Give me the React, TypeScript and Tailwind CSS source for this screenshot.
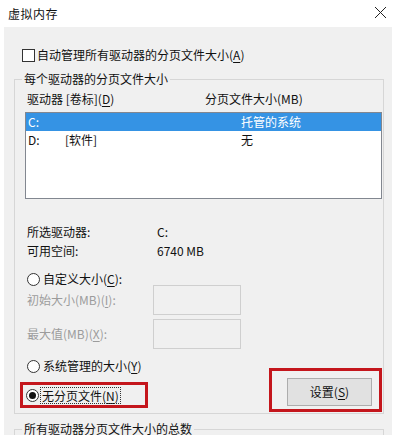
import React from "react"

const font = { fontFamily: '"Noto Sans CJK SC", "Noto Sans", sans-serif' }

function Key({ k }: { k: string }) {
  return (
    <>
      (<span className="underline underline-offset-2">{k}</span>)
    </>
  )
}

function Radio({ checked }: { checked?: boolean }) {
  return (
    <span className="w-[13px] h-[13px] rounded-full border border-[#333] bg-white flex items-center justify-center shrink-0">
      {checked ? <span className="w-[7px] h-[7px] rounded-full bg-[#111]" /> : null}
    </span>
  )
}

export default function App() {
  return (
    <div
      className="w-[409px] h-[435px] bg-white overflow-hidden flex flex-col text-[12px] leading-[16px] text-[#111]"
      style={font}
    >
      {/* title bar */}
      <div className="h-[27px] shrink-0 flex items-center justify-between pl-[8px] pr-[22px]">
        <span className="tracking-[0.5px]">虚拟内存</span>
        <svg width="13" height="13" viewBox="0 0 13 13" className="mt-[-3px]">
          <path d="M1 1 L12 12 M12 1 L1 12" stroke="#222" strokeWidth="1" fill="none" />
        </svg>
      </div>

      {/* body */}
      <div className="ml-[4px] w-[388px] flex-1 bg-[#f0f0f0] pt-[20px]">
        <div className="flex items-center h-[16px] pl-[18px] gap-[2px]">
          <span className="w-[13px] h-[13px] border border-[#333] bg-white shrink-0" />
          <span>
            自动管理所有驱动器的分页文件大小<Key k="A" />
          </span>
        </div>

        <fieldset className="mt-[8px] ml-[10px] w-[370px] border border-[#d6d6d6] pl-[10px] pr-[1px] pb-[1px]">
          <legend className="ml-[-3px] px-[2px] h-[16px]">每个驱动器的分页文件大小</legend>

          <div className="mt-[4px] flex h-[16px]">
            <span className="ml-[2px] w-[178px]">
              驱动器 [卷标]<Key k="D" />
            </span>
            <span>分页文件大小(MB)</span>
          </div>

          <div className="mt-[5px] h-[87px] border border-[#828790] bg-white">
            <div className="flex h-[18px] items-center bg-[#3593e4] text-white">
              <span className="pl-[2px] w-[215px]">C:</span>
              <span>托管的系统</span>
            </div>
            <div className="flex h-[18px] items-center">
              <span className="pl-[2px] w-[39px]">D:</span>
              <span className="w-[176px]">[软件]</span>
              <span>无</span>
            </div>
          </div>

          <div className="mt-[24px] flex h-[18px] items-center">
            <span className="ml-[2px] w-[130px]">所选驱动器:</span>
            <span>C:</span>
          </div>
          <div className="mt-[1px] flex h-[18px] items-center">
            <span className="ml-[2px] w-[130px]">可用空间:</span>
            <span>6740 MB</span>
          </div>

          <div className="mt-[12px] flex h-[14px] items-center gap-[3px] ml-[2px]">
            <Radio />
            <span>
              自定义大小<Key k="C" />:
            </span>
          </div>
          <div className="mt-[-1px] flex h-[30px] items-center">
            <span className="ml-[2px] w-[126px] text-[#9c9c9c]">
              初始大小(MB)<Key k="I" />:
            </span>
            <span className="w-[88px] h-[30px] border border-[#cfcfcf] bg-[#f0f0f0]" />
          </div>
          <div className="mt-[4px] flex h-[30px] items-center">
            <span className="ml-[2px] w-[126px] text-[#9c9c9c]">
              最大值(MB)<Key k="X" />:
            </span>
            <span className="w-[88px] h-[30px] border border-[#cfcfcf] bg-[#f0f0f0]" />
          </div>

          <div className="mt-[8px] flex justify-between">
            <div className="flex flex-col">
              <div className="flex h-[18px] items-center gap-[3px] ml-[2px]">
                <Radio />
                <span>
                  系统管理的大小<Key k="Y" />
                </span>
              </div>
              <div className="mt-[7px] ml-[-5px] w-[128px] h-[26px] border-[3px] border-[#c4161c] flex items-center pl-[3px] gap-[2px]">
                <Radio checked />
                <span className="outline outline-1 outline-dotted outline-[#333] px-[1px] leading-[15px]">
                  无分页文件<Key k="N" />
                </span>
              </div>
            </div>
            <div className="mt-[11px] w-[113px] h-[44px] border-[3px] border-[#c4161c] pl-[15px] pr-[7px] pt-[7px] pb-[3px]">
              <div className="w-[85px] h-[28px] border border-[#adadad] bg-[#e1e1e1] flex items-center justify-center">
                设置<Key k="S" />
              </div>
            </div>
          </div>
        </fieldset>

        <fieldset className="mt-[7px] ml-[10px] w-[370px] h-[80px] border border-[#d6d6d6] pl-[10px]">
          <legend className="ml-[-3px] px-[2px] h-[16px]">所有驱动器分页文件大小的总数</legend>
        </fieldset>
      </div>
    </div>
  )
}
